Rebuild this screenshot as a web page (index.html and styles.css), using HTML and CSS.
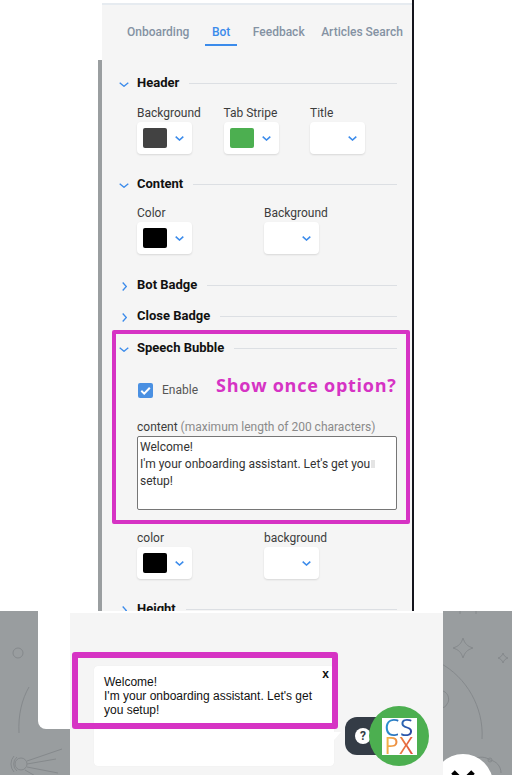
FILE: index.html
```html
<!DOCTYPE html>
<html lang="en">
<head>
  <meta charset="UTF-8" />
  <title>Bot settings</title>
  <link rel="stylesheet" href="styles.css">
</head>
<body>
  <svg class="defs" width="0" height="0">
    <symbol id="down" viewBox="0 0 10 5"><path d="M.7.7 5 4.3 9.3.7" fill="none" stroke="currentColor" stroke-width="1.3"/></symbol>
    <symbol id="right" viewBox="0 0 5 9"><path d="M.7.5 4.3 4.5.7 8.5" fill="none" stroke="currentColor" stroke-width="1.3"/></symbol>
    <symbol id="small" viewBox="0 0 9 5"><path d="M.7.7 4.5 4 8.3.7" fill="none" stroke="currentColor" stroke-width="1.6"/></symbol>
  </svg>

  <div class="top">
    <div class="rail"></div>
    <div class="edge">
      <div class="panel">
        <div class="tabs">
          <div class="tab">Onboarding</div>
          <div class="tab active">Bot</div>
          <div class="tab">Feedback</div>
          <div class="tab last">Articles Search</div>
        </div>

        <div class="head first"><svg class="chev"><use href="#down"/></svg><b>Header</b><i></i></div>
        <div class="fields first-fields">
          <div class="field"><label>Background</label><div class="picker"><span class="swatch dark"></span><svg class="arrow"><use href="#small"/></svg></div></div>
          <div class="field"><label>Tab Stripe</label><div class="picker"><span class="swatch green"></span><svg class="arrow"><use href="#small"/></svg></div></div>
          <div class="field"><label>Title</label><div class="picker"><span class="swatch"></span><svg class="arrow"><use href="#small"/></svg></div></div>
        </div>

        <div class="head"><svg class="chev"><use href="#down"/></svg><b>Content</b><i></i></div>
        <div class="fields wide">
          <div class="field"><label>Color</label><div class="picker"><span class="swatch black"></span><svg class="arrow"><use href="#small"/></svg></div></div>
          <div class="field"><label>Background</label><div class="picker"><span class="swatch"></span><svg class="arrow"><use href="#small"/></svg></div></div>
        </div>

        <div class="head closed badge"><svg class="chev-r"><use href="#right"/></svg><b>Bot Badge</b><i></i></div>
        <div class="head closed close-badge"><svg class="chev-r"><use href="#right"/></svg><b>Close Badge</b><i></i></div>

        <div class="speech">
          <div class="head closed"><svg class="chev"><use href="#down"/></svg><b>Speech Bubble</b><i></i></div>
          <div class="enable">
            <span class="check"><svg width="15" height="15" viewBox="0 0 15 15"><path d="M3.3 7.8 6.2 10.6 11.8 4.8" fill="none" stroke="#fff" stroke-width="2"/></svg></span>
            <span>Enable</span>
          </div>
          <label class="content-label">content <span>(maximum length of 200 characters)</span></label>
          <div class="textarea">Welcome!<br>I'm your onboarding assistant. Let's get you<span class="smudge"></span><br>setup!</div>
          <div class="note-box"></div>
          <div class="note">Show once option?</div>
        </div>

        <div class="fields wide lower">
          <div class="field"><label>color</label><div class="picker"><span class="swatch black"></span><svg class="arrow"><use href="#small"/></svg></div></div>
          <div class="field"><label>background</label><div class="picker"><span class="swatch"></span><svg class="arrow"><use href="#small"/></svg></div></div>
        </div>

        <div class="head closed height"><svg class="chev-r"><use href="#right"/></svg><b>Height</b><i></i></div>
      </div>
    </div>
  </div>

  <div class="stage">
    <!-- background doodles -->
    <svg class="doodles" width="512" height="164" viewBox="0 0 512 164" fill="none" stroke="#85898c" stroke-width="1">
      <circle cx="18" cy="42" r="5"/>
      <path d="M29 76C22 88 18 104 19 122"/>
      <circle cx="21" cy="153" r="6"/><path d="M17 146a9 9 0 0 0 0 14M14 145a12 12 0 0 0 0 16"/>
      <path d="M27 150 62 138M27 153 56 148M27 156 58 162M25 159 44 170"/>
      <path d="M463 27c2 6 4 8 10 10-6 2-8 4-10 10-2-6-4-8-10-10 6-2 8-4 10-10z"/>
      <path d="M503 42c1 3 2 4 5 5-3 1-4 2-5 5-1-3-2-4-5-5 3-1 4-2 5-5z"/>
      <path d="M440 52c26 14 44 44 42 76"/>
      <path d="M443 80c6 2 7 10 4 13-1 3-4 4-7 4"/>
      <circle cx="490" cy="149" r="2"/><path d="M474 148c6-3 12-2 16 1 6 1 11 6 11 13"/>
      <path d="M437 0v3M460 0v3M476 0v3"/>
    </svg>
    <div class="close-bubble">
      <svg width="60" height="60" viewBox="0 0 60 60"><path d="M20 18 30 28M40 18 30 28" stroke="#000" stroke-width="5" fill="none"/></svg>
    </div>

    <div class="white-block"></div>
    <div class="preview">
      <div class="bubble">
        Welcome!<br>I'm your onboarding assistant. Let's get you setup!
        <span class="bubble-x">x</span>
      </div>
      <div class="help"><span class="help-icon">?</span></div>
      <div class="bot">
        <div class="logo"><span class="cs">CS</span><span class="px">PX</span></div>
      </div>
      <div class="note-box2"></div>
    </div>
  </div>
</body>
</html>
```

FILE: styles.css
```css
* { box-sizing: border-box; }
html, body { margin: 0; height: 775px; overflow: hidden; background: #fff; }
body { font-family: Roboto, sans-serif; font-size: 12px; color: #333; }
.defs { position: absolute; }

.top { display: flex; margin-left: 98px; width: 316px; height: 611px; overflow: hidden; }
.rail { flex: none; width: 4px; margin-top: 60px; background: #9a9ea0; }
.edge { flex: 1; min-width: 0; border-right: 2px solid #14141c; padding-top: 3px; }
.panel { height: 608px; background: #f5f5f5; border-top: 2px solid #e6ebf0; padding: 20px 15px 0 17px; }

.tabs { display: flex; gap: 8.5px; margin-left: 1px; margin-bottom: 29px; }
.tab { padding: 0 7px 5px; line-height: 14px; font-weight: 500; color: #8492a3; border-bottom: 2px solid transparent; white-space: nowrap; }
.tab.active { color: #3b8beb; border-bottom-color: #3b8beb; }
.tab.last { margin-left: -6px; }

.head { display: flex; align-items: center; height: 16px; line-height: 16px; }
.head b { font-size: 13px; font-weight: 700; color: #111; margin-right: 10px; margin-top: -1px; white-space: nowrap; }
.head i { flex: 1; height: 1px; background: #dcdfe3; }
.chev { flex: none; width: 10px; height: 5px; margin-right: 8px; margin-top: 2px; color: #3b8beb; }
.chev-r { flex: none; width: 5px; height: 9px; margin-left: 3px; margin-right: 10px; margin-top: 2px; color: #3b8beb; }

.fields { display: flex; gap: 31.5px; margin: 14px 0 22px 18px; }
.first-fields { margin-top: 15px; }
.fields.wide { gap: 72px; }
.field { width: 55px; }
.field label { display: block; line-height: 14px; margin-bottom: 2px; white-space: nowrap; color: #3c3c3c; }
.picker { display: flex; align-items: center; width: 55px; height: 32px; padding-left: 6px; background: #fff; border-radius: 4px; box-shadow: 0 1px 2px rgba(0, 0, 0, .12); }
.swatch { width: 24px; height: 20px; border-radius: 2px; }
.swatch.dark { background: #424242; }
.swatch.green { background: #4caf50; }
.swatch.black { background: #000; }
.arrow { width: 9px; height: 5px; margin-left: 8px; color: #3b8beb; }

.badge { margin-top: 23px; }
.close-badge { margin-top: 15px; }

.speech { position: relative; margin-top: 16px; }
.enable { display: flex; align-items: center; gap: 9px; margin: 26px 0 0 19px; height: 16px; color: #555; }
.check { width: 15px; height: 15px; border-radius: 2px; background: #4a90e2; }
.check svg { display: block; }
.content-label { display: block; margin: 22px 0 2px 18px; line-height: 14px; color: #3c3c3c; }
.content-label span { color: #8a8a8a; }
.textarea { margin-left: 18px; width: 260px; height: 74px; padding: 2px; border: 1px solid #767676; border-radius: 2px; background: #fff; line-height: 17px; color: #333; }
.smudge { display: inline-block; width: 4px; height: 8px; margin-left: 1px; background: #e4e4e4; }

/* annotations drawn over the screenshot */
.note-box { position: absolute; left: -7px; top: -10px; width: 298px; height: 194px; border: 4px solid #d633c4; border-radius: 2px; }
.note { position: absolute; left: 97px; top: 33px; font-family: "Open Sans", sans-serif; font-size: 18px; line-height: 24px; font-weight: 700; color: #d633c4; letter-spacing: .75px; white-space: nowrap; }

.lower { margin-top: 21px; }
.height { margin-top: 22px; }

.stage { position: relative; display: flex; height: 164px; padding-left: 38px; background: #999d9f; overflow: hidden; }
.doodles { position: absolute; left: 0; top: 0; }
.close-bubble { position: absolute; left: 433px; top: 143px; width: 60px; height: 60px; border-radius: 50%; background: #fff; }
.white-block { position: relative; width: 32px; height: 118px; background: #fff; border-bottom-left-radius: 8px; }
.preview { position: relative; display: flex; align-items: flex-end; width: 373px; height: 164px; padding: 0 0 9px 24px; background: #f5f5f5; border-top: 2px solid #fff; }

.bubble { position: relative; width: 240px; height: 100px; padding: 9px 10px; background: #fff; border-radius: 4px; font-family: "Liberation Sans", sans-serif; line-height: 14px; color: #111; box-shadow: 0 0 1px rgba(0, 0, 0, .08); }
.bubble::after { content: ""; position: absolute; left: 240px; top: 66px; width: 7px; height: 8px; background: #fff; clip-path: polygon(0 0, 100% 0, 0 100%); }
.bubble-x { position: absolute; right: 5px; top: 1px; font-weight: 700; color: #111; }

.help { display: flex; align-items: center; width: 42px; height: 38px; margin: 0 0 11px 11px; padding-left: 10px; background: #343c46; border-radius: 12px 0 0 12px; }
.help-icon { width: 16px; height: 16px; border-radius: 50%; background: #fff; color: #343c46; font-weight: 700; font-size: 12px; line-height: 16px; text-align: center; }
.bot { position: relative; display: flex; align-items: center; justify-content: center; width: 60px; height: 60px; margin-left: -18px; border-radius: 50%; background: #4caf50; }
.logo { display: flex; flex-direction: column; align-items: center; width: 35px; height: 37px; background: #fff; font-family: "Open Sans", sans-serif; font-size: 24px; font-weight: 500; line-height: 18px; letter-spacing: .5px; }
.logo span { background-clip: text; -webkit-background-clip: text; color: transparent; }
.cs { background-image: linear-gradient(100deg, #2b9ad6, #2b3f9b); }
.px { background-image: linear-gradient(100deg, #f6c04a, #e0483a); }

.note-box2 { position: absolute; left: 2px; top: 39px; width: 266px; height: 77px; border: 6px solid #d633c4; border-radius: 3px; }
```
